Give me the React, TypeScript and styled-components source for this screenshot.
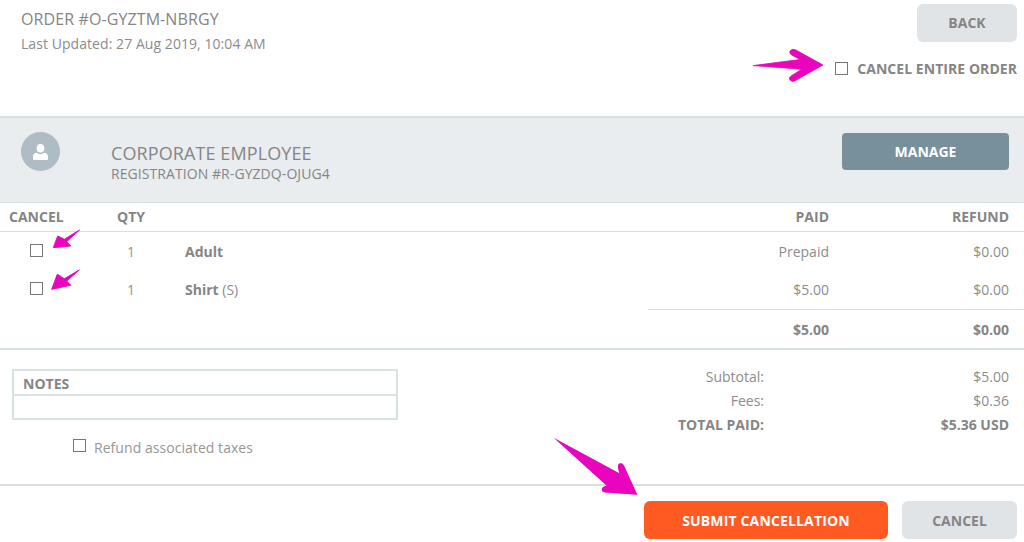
import React from "react";
import styled, { createGlobalStyle } from "styled-components";

const Global = createGlobalStyle`
  html, body { margin: 0; padding: 0; background: #fff; }
  body { font-family: "Open Sans", "Liberation Sans", sans-serif; color: #8a8a8a; overflow: hidden; }
  * { box-sizing: border-box; }
`;

const Page = styled.div`
  position: relative;
  width: 1024px;
  height: 542px;
  overflow: hidden;
`;

const Header = styled.header`
  height: 116px;
  display: flex;
  justify-content: space-between;
  padding: 4px 7px 0 21px;
`;

const OrderInfo = styled.div`
  display: flex;
  flex-direction: column;
`;

const OrderTitle = styled.div`
  font-size: 16px;
  line-height: 22px;
  margin-top: 4px;
  letter-spacing: 0.1px;
  color: #858585;
`;

const Updated = styled.div`
  font-size: 14px;
  line-height: 20px;
  margin-top: 4px;
  letter-spacing: 0.06px;
  color: #8c8c8c;
`;

const HeaderActions = styled.div`
  display: flex;
  flex-direction: column;
  align-items: flex-end;
  gap: 17px;
`;

const GreyButton = styled.button<{ $width: number }>`
  width: ${(p) => p.$width}px;
  height: 38px;
  border: 0;
  border-radius: 6px;
  background: #e1e4e7;
  color: #858585;
  font: 700 14px "Open Sans", sans-serif;
`;

const BackButton = styled(GreyButton)`
  padding-bottom: 3px;
`;

const CheckRow = styled.label`
  display: flex;
  align-items: center;
  gap: 9px;
`;

const Box = styled.span`
  display: block;
  width: 13px;
  height: 13px;
  border: 1.5px solid #777;
  background: #fff;
`;

const EntireBox = styled(Box)`
  margin-bottom: 2px;
`;

const RefundBox = styled(Box)`
  margin-bottom: 6px;
`;

const EntireLabel = styled.span`
  font-size: 14px;
  font-weight: 700;
  line-height: 20px;
  letter-spacing: 0.05px;
  color: #858585;
`;

const Band = styled.section`
  height: 87px;
  display: flex;
  background: #e9edf0;
  border-top: 2px solid #d8dfe3;
  border-bottom: 1px solid #d8dfe3;
  padding: 14px 15px 0 21px;
`;

const Avatar = styled.div`
  width: 39px;
  height: 39px;
  border-radius: 50%;
  background: #aebcc3;
  display: flex;
  align-items: center;
  justify-content: center;
  flex: none;
`;

const Attendee = styled.div`
  margin-left: 51px;
  flex: 1;
  padding-top: 9px;
`;

const AttendeeName = styled.div`
  font-size: 18px;
  line-height: 24px;
  letter-spacing: 0.1px;
  color: #858585;
`;

const AttendeeSub = styled.div`
  font-size: 14px;
  line-height: 18px;
  letter-spacing: 0.07px;
  color: #858585;
`;

const ManageButton = styled.button`
  width: 167px;
  height: 37px;
  margin-top: 1px;
  border: 0;
  border-radius: 4px;
  background: #78909c;
  color: #fff;
  font: 700 14px "Open Sans", sans-serif;
`;

const columns = "108px 68px 1fr 160px 180px";

const TableHead = styled.div`
  display: grid;
  grid-template-columns: ${columns};
  height: 29px;
  align-items: center;
  padding: 0 15px 1px 9px;
  border-bottom: 1px solid #d8dfe3;
  font-size: 14px;
  font-weight: 700;
  color: #858585;
`;

const Row = styled.div`
  display: grid;
  grid-template-columns: ${columns};
  height: 38px;
  align-items: center;
  padding: 0 15px 0 9px;
  font-size: 14px;
  color: #8c8c8c;
`;

const Cell = styled.div<{ $right?: boolean }>`
  text-align: ${(p) => (p.$right ? "right" : "left")};
`;

const CheckCell = styled.div`
  padding: 0 0 2px 21px;
`;

const Qty = styled.div`
  padding-left: 10px;
  color: #a58f7d;
`;

const ItemName = styled.strong`
  font-weight: 700;
  color: #858585;
`;

const TotalsRow = styled.div`
  margin: 1px 0 0 648px;
  height: 39px;
  border-top: 1px solid #d8dfe3;
  padding: 1px 15px 0 0;
  display: grid;
  grid-template-columns: 181px 180px;
  align-items: center;
  font-size: 14px;
  font-weight: 700;
  color: #858585;
`;

const Lower = styled.section`
  height: 138px;
  border-top: 2px solid #d8dfe3;
  border-bottom: 2px solid #d8dfe3;
  display: flex;
  justify-content: space-between;
  padding: 19px 15px 0 12px;
`;

const NotesColumn = styled.div`
  width: 386px;
`;

const NotesBox = styled.div`
  border: 2px solid #d8e2e2;
  height: 51px;
`;

const NotesHead = styled.div`
  height: 25px;
  padding-left: 9px;
  border-bottom: 2px solid #d8e2e2;
  font-size: 14px;
  font-weight: 700;
  line-height: 26px;
  color: #858585;
`;

const RefundRow = styled.label`
  display: flex;
  align-items: center;
  gap: 8px;
  margin: 18px 0 0 61px;
  font-size: 14px;
  line-height: 20px;
  letter-spacing: 0.05px;
  color: #969696;
`;

const Summary = styled.div`
  display: grid;
  grid-template-columns: 116px 245px;
  grid-auto-rows: 24px;
  align-items: center;
  text-align: right;
  font-size: 14px;
  color: #8c8c8c;
  margin-top: -5px;
  height: 72px;
`;

const SummaryStrong = styled.div`
  font-weight: 700;
  color: #858585;
  white-space: nowrap;
  display: flex;
  justify-content: flex-end;
`;

const Footer = styled.footer`
  display: flex;
  justify-content: flex-end;
  gap: 14px;
  padding: 15px 7px 0 0;
`;

const SubmitButton = styled.button`
  width: 244px;
  height: 38px;
  border: 0;
  border-radius: 6px;
  background: #ff5a22;
  color: #fff;
  letter-spacing: 0.15px;
  font: 700 14px "Open Sans", sans-serif;
`;

const Arrow = styled.svg<{ $x: number; $y: number; $w: number; $h: number }>`
  position: absolute;
  left: ${(p) => p.$x}px;
  top: ${(p) => p.$y}px;
  width: ${(p) => p.$w}px;
  height: ${(p) => p.$h}px;
  overflow: visible;
  filter: drop-shadow(0 0.5px 0.5px rgba(90, 60, 80, 0.35));
`;

const ARROW_FILL = "#ea04bd";

export default function App() {
  return (
    <Page>
      <Global />
      <Header>
        <OrderInfo>
          <OrderTitle>ORDER #O-GYZTM-NBRGY</OrderTitle>
          <Updated>Last Updated: 27 Aug 2019, 10:04 AM</Updated>
        </OrderInfo>
        <HeaderActions>
          <BackButton $width={100}>BACK</BackButton>
          <CheckRow>
            <EntireBox />
            <EntireLabel>CANCEL ENTIRE ORDER</EntireLabel>
          </CheckRow>
        </HeaderActions>
      </Header>

      <Band>
        <Avatar>
          <svg width="15" height="18" viewBox="0 0 18 20" fill="#fff">
            <ellipse cx="9" cy="5.5" rx="4.6" ry="5.2" />
            <path d="M1 19.5c-.6 0-1-.4-1-1v-3c0-2.6 2-4.5 4.4-4.5 1.2 1 2.8 1.6 4.6 1.6s3.4-.6 4.6-1.6c2.4 0 4.4 1.9 4.4 4.5v3c0 .6-.4 1-1 1H1z" />
          </svg>
        </Avatar>
        <Attendee>
          <AttendeeName>CORPORATE EMPLOYEE</AttendeeName>
          <AttendeeSub>REGISTRATION #R-GYZDQ-OJUG4</AttendeeSub>
        </Attendee>
        <ManageButton>MANAGE</ManageButton>
      </Band>

      <TableHead>
        <Cell>CANCEL</Cell>
        <Cell>QTY</Cell>
        <Cell />
        <Cell $right>PAID</Cell>
        <Cell $right>REFUND</Cell>
      </TableHead>
      <Row>
        <CheckCell><Box /></CheckCell>
        <Qty>1</Qty>
        <Cell><ItemName>Adult</ItemName></Cell>
        <Cell $right>Prepaid</Cell>
        <Cell $right>$0.00</Cell>
      </Row>
      <Row>
        <CheckCell><Box /></CheckCell>
        <Qty>1</Qty>
        <Cell><ItemName>Shirt</ItemName> (S)</Cell>
        <Cell $right>$5.00</Cell>
        <Cell $right>$0.00</Cell>
      </Row>
      <TotalsRow>
        <Cell $right>$5.00</Cell>
        <Cell $right>$0.00</Cell>
      </TotalsRow>

      <Lower>
        <NotesColumn>
          <NotesBox>
            <NotesHead>NOTES</NotesHead>
          </NotesBox>
          <RefundRow>
            <RefundBox />
            Refund associated taxes
          </RefundRow>
        </NotesColumn>
        <Summary>
          <Cell $right>Subtotal:</Cell>
          <Cell $right>$5.00</Cell>
          <Cell $right>Fees:</Cell>
          <Cell $right>$0.36</Cell>
          <SummaryStrong>TOTAL PAID:</SummaryStrong>
          <SummaryStrong>$5.36 USD</SummaryStrong>
        </Summary>
      </Lower>

      <Footer>
        <SubmitButton>SUBMIT CANCELLATION</SubmitButton>
        <GreyButton $width={115}>CANCEL</GreyButton>
      </Footer>

      <Arrow $x={753} $y={49} $w={70} $h={33} viewBox="0 0 70 33">
        <path d="M0 16.6 L47 10.5 L38.5 6 Q35.5 3.5 37.5 1.5 Q39.5 -0.5 42.5 0.8 L70 16 L42 31.8 Q39 33.3 37 31 Q35.5 28.8 38 27 L48.7 20.3 Z" fill={ARROW_FILL} stroke={ARROW_FILL} strokeWidth="0.6" strokeLinejoin="round" />
      </Arrow>
      <Arrow $x={53} $y={230} $w={27} $h={18} viewBox="0 0 27 18">
        <path d="M26.5 0 L13.7 11.7 L17.7 16 L0.3 17.7 L4.7 6 L11.3 9.3 Z" fill={ARROW_FILL} stroke={ARROW_FILL} strokeWidth="0.8" strokeLinejoin="round" />
      </Arrow>
      <Arrow $x={50} $y={270} $w={30} $h={20} viewBox="0 0 30 20">
        <path d="M29.3 0 L16.7 11 L20.7 15.3 L1.7 19.3 L7.3 4.3 L14.3 8.7 Z" fill={ARROW_FILL} stroke={ARROW_FILL} strokeWidth="0.8" strokeLinejoin="round" />
      </Arrow>
      <Arrow $x={554} $y={438} $w={84} $h={58} viewBox="0 0 84 58">
        <path d="M0 0 L65.3 35.3 L64 30 Q63.5 26 66 25.2 Q68.5 24.8 70 27.5 L83.3 56.7 L51.5 54.5 Q47.5 54 47.8 51 Q48.2 48.8 50.5 48.2 L52.7 47.7 Z" fill={ARROW_FILL} />
      </Arrow>
    </Page>
  );
}
